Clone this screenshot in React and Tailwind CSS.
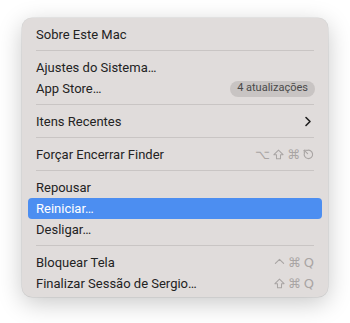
import React from 'react';

const EscIcon = () => (
  <svg width="11" height="11" viewBox="0 0 12 12" fill="none" stroke="currentColor" strokeWidth="1.2" strokeLinecap="round">
    <path d="M4.2 1.6 A4.6 4.6 0 1 1 1.6 4.2" />
    <path d="M1.4 1.4 L5 5" />
    <path d="M1.4 1.4 L1.4 4" />
    <path d="M1.4 1.4 L4 1.4" />
  </svg>
);

const ShiftIcon = () => (
  <svg width="11" height="11" viewBox="0 0 12 12" fill="none" stroke="currentColor" strokeWidth="1.1" strokeLinejoin="round">
    <path d="M6 1.2 L11 6.2 L8.2 6.2 L8.2 10.6 L3.8 10.6 L3.8 6.2 L1 6.2 Z" />
  </svg>
);

const CtrlIcon = () => (
  <svg width="11" height="11" viewBox="0 0 12 12" fill="none" stroke="currentColor" strokeWidth="1.2" strokeLinecap="round" strokeLinejoin="round">
    <path d="M1.5 7 L6 2.5 L10.5 7" />
  </svg>
);

const Separator = () => (
  <div className="pt-[5px] pb-[6px] mx-[14px]">
    <div className="h-px bg-[#c9c5c4]" />
  </div>
);

const Item = ({ label, active, right }) => (
  <div
    className={`mx-[6px] h-[21px] px-2 flex items-center justify-between rounded-[4px] ${
      active ? 'bg-[#4c8ef1] text-white' : 'text-[#232323]'
    }`}
  >
    <span>{label}</span>
    {right}
  </div>
);

const Keys = ({ children }) => (
  <span className="flex items-center gap-[3px] text-[13px] text-[#a9a5a4] font-['DejaVu_Sans',sans-serif]">
    {children}
  </span>
);

export default function App() {
  return (
    <div className="w-[350px] h-[323px] bg-white pt-[18px] pl-[22px] font-['Roboto','Liberation_Sans',sans-serif] text-[13px]">
      <div className="w-[306px] h-[279px] bg-[#e0dcdb] rounded-[10px] pt-[6px] shadow-[0_6px_24px_rgba(0,0,0,0.22),0_0_0_0.5px_rgba(0,0,0,0.12)]">
        <Item label="Sobre Este Mac" />
        <Separator />
        <Item label="Ajustes do Sistema…" />
        <Item
          label="App Store…"
          right={
            <span className="h-4 px-[7px] -mr-[1px] rounded-full bg-[#c8c4c3] text-[11px] text-[#4a4a4a] flex items-center">
              4 atualizações
            </span>
          }
        />
        <Separator />
        <Item
          label="Itens Recentes"
          right={
            <svg width="8" height="11" viewBox="0 0 8 11" fill="none" stroke="#1f1f1f" strokeWidth="1.6" strokeLinecap="round" strokeLinejoin="round" className="mr-[2px]">
              <path d="M2 1.5 L6 5.5 L2 9.5" />
            </svg>
          }
        />
        <Separator />
        <Item
          label="Forçar Encerrar Finder"
          right={
            <Keys>
              <span>⌥</span>
              <ShiftIcon />
              <span>⌘</span>
              <EscIcon />
            </Keys>
          }
        />
        <Separator />
        <Item label="Repousar" />
        <Item label="Reiniciar…" active />
        <Item label="Desligar…" />
        <Separator />
        <Item
          label="Bloquear Tela"
          right={
            <Keys>
              <CtrlIcon />
              <span>⌘</span>
              <span>Q</span>
            </Keys>
          }
        />
        <Item
          label="Finalizar Sessão de Sergio…"
          right={
            <Keys>
              <ShiftIcon />
              <span>⌘</span>
              <span>Q</span>
            </Keys>
          }
        />
      </div>
    </div>
  );
}
